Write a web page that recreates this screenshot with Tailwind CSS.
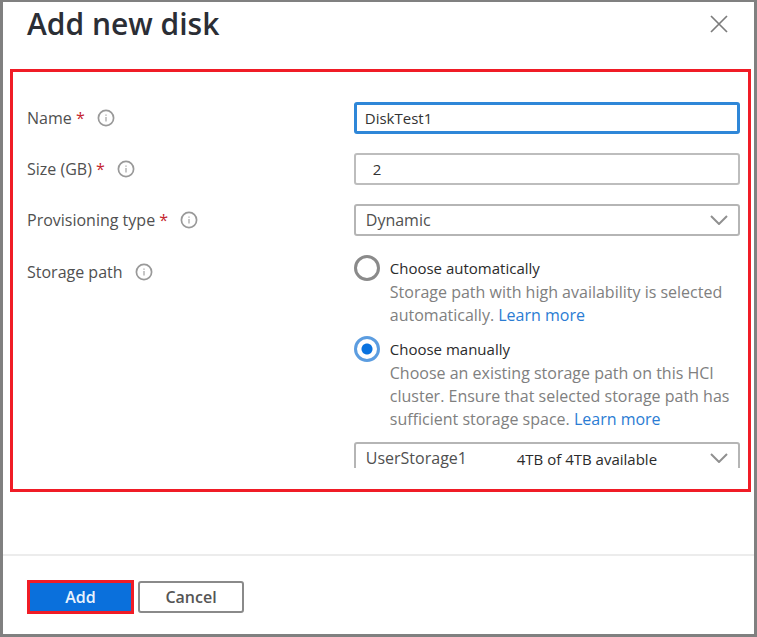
<!DOCTYPE html>
<html lang="en">
<head>
<meta charset="utf-8">
<meta name="viewport" content="width=device-width, initial-scale=1">
<title>Add new disk</title>
<script src="https://cdn.jsdelivr.net/npm/@tailwindcss/browser@4"></script>
</head>
<body class="flex min-h-screen flex-col border-3 border-t-2 border-[#808080] bg-white font-['Open_Sans','Noto_Sans',sans-serif] text-base text-[#505050]">
<svg class="hidden" aria-hidden="true">
  <symbol id="info" viewBox="0 0 18 18">
    <circle cx="9" cy="9" r="7.6" fill="none" stroke="#999" stroke-width="1.7"/>
    <path d="M9 5.6v1.2M9 8v4.4" stroke="#b4b4b4" stroke-width="1.5"/>
  </symbol>
  <symbol id="chevron" viewBox="0 0 18 10">
    <path d="M1 1l8 8 8-8" fill="none" stroke="#909090" stroke-width="2"/>
  </symbol>
</svg>

<header class="flex items-center justify-between pr-[26px] pl-6">
  <h1 class="text-[30px] leading-[43px] font-semibold text-[#2b2e35]">Add new disk</h1>
  <button type="button" aria-label="Close" class="size-[18px]">
    <svg viewBox="0 0 18 18" class="size-[18px]"><path d="M1 1l16 16M17 1L1 17" stroke="#7c7c7c" stroke-width="1.7" fill="none"/></svg>
  </button>
</header>

<form id="disk" class="flex grow flex-col">
  <main class="mx-[7px] mt-6 mr-[3px] flex flex-col gap-[19px] border-3 border-[#f01c26] pt-[30px] pr-2 pb-[21px] pl-[14px]">
    <div class="grid grid-cols-[11fr_13fr] items-center">
      <div class="flex items-center gap-3">
        <label for="name">Name <span class="text-[#c4262e]">*</span></label>
        <svg class="size-[18px]" role="img" aria-label="Info"><use href="#info"/></svg>
      </div>
      <input id="name" type="text" value="DiskTest1" required class="h-8 w-full rounded-[3px] border-3 border-[#2f87d8] px-2 text-[15px] text-[#333] outline-none">
    </div>
    <div class="grid grid-cols-[11fr_13fr] items-center">
      <div class="flex items-center gap-3">
        <label for="size">Size (GB) <span class="text-[#c4262e]">*</span></label>
        <svg class="size-[18px]" role="img" aria-label="Info"><use href="#info"/></svg>
      </div>
      <input id="size" type="text" value="2" required class="h-8 w-full rounded-[3px] border-2 border-[#bdbdbd] px-[17px] text-[15px] text-[#333] outline-none">
    </div>
    <div class="grid grid-cols-[11fr_13fr] items-center">
      <div class="flex items-center gap-3">
        <label for="type">Provisioning type <span class="text-[#c4262e]">*</span></label>
        <svg class="size-[18px]" role="img" aria-label="Info"><use href="#info"/></svg>
      </div>
      <div class="relative">
        <select id="type" class="block h-8 w-full appearance-none rounded-[3px] border-2 border-[#b5b5b5] px-[10px] outline-none">
          <option>Dynamic</option>
        </select>
        <svg class="pointer-events-none absolute top-[11px] right-3 h-[10px] w-[18px]"><use href="#chevron"/></svg>
      </div>
    </div>
    <div class="grid grid-cols-[11fr_13fr] items-start">
      <div class="flex h-[34px] items-center gap-3">
        <span id="path-label">Storage path</span>
        <svg class="size-[18px]" role="img" aria-label="Info"><use href="#info"/></svg>
      </div>
      <div role="radiogroup" aria-labelledby="path-label">
        <div class="flex items-center gap-[10px]">
          <input id="auto" type="radio" name="path" class="size-[26px] appearance-none rounded-full border-3 border-[#8a8a8a]">
          <label for="auto" class="text-[15px] text-[#2b2b2b]">Choose automatically</label>
        </div>
        <p class="pl-9 leading-[23px] text-[#808080]">Storage path with high availability is selected automatically. <a href="#" class="text-[#2b7cd3]">Learn more</a></p>
        <div class="mt-[9px] flex items-center gap-[10px]">
          <input id="manual" type="radio" name="path" checked class="size-[26px] appearance-none rounded-full border-3 border-[#5c9de0] bg-[radial-gradient(circle,#0a73e0_5px,#fff_6px)]">
          <label for="manual" class="text-[15px] text-[#2b2b2b]">Choose manually</label>
        </div>
        <p class="pl-9 leading-[23px] text-[#808080]">Choose an existing storage path on this HCI cluster. Ensure that selected storage path has sufficient storage space. <a href="#" class="text-[#2b7cd3]">Learn more</a></p>
        <div class="relative mt-[11px] h-[26px] overflow-hidden">
          <select aria-label="Storage path" class="block h-8 w-full appearance-none rounded-[3px] border-2 border-[#b5b5b5] px-[10px] outline-none">
            <option>UserStorage1</option>
          </select>
          <span class="pointer-events-none absolute top-0 left-[163px] text-[15px] leading-[34px] text-[#2b2b2b]">4TB of 4TB available</span>
          <svg class="pointer-events-none absolute top-[11px] right-3 h-[10px] w-[18px]"><use href="#chevron"/></svg>
        </div>
      </div>
    </div>
  </main>

  <footer class="mt-auto flex items-center gap-1 border-t-2 border-[#ececec] px-6 pt-6 pb-5">
    <button type="submit" class="h-[34px] w-[107px] border-3 border-[#f01c26] bg-[#0a70dc] font-semibold text-[#e8f2fd]">Add</button>
    <button type="button" class="h-8 w-[106px] rounded-[3px] border-2 border-[#8a8a8a] font-semibold text-[#555]">Cancel</button>
  </footer>
</form>
</body>
</html>
